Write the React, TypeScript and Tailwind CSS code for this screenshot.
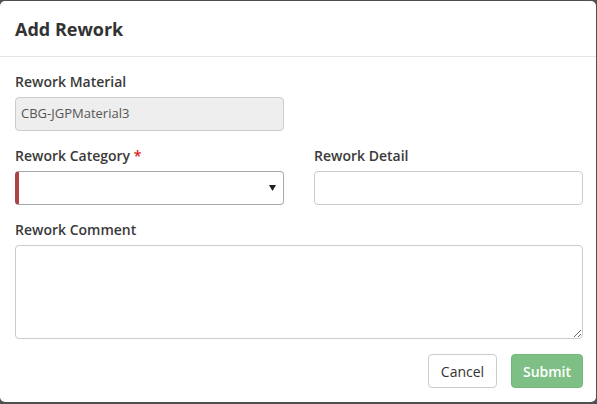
import React from "react";

export default function App() {
  const font = { fontFamily: '"Open Sans", "Liberation Sans", sans-serif' };
  return (
    <div className="w-[597px] h-[404px] bg-[#4f4f4f] pt-[1px] overflow-hidden" style={font}>
      <div className="w-[596px] h-[401px] bg-white rounded-[5px] flex flex-col">
        <div className="h-[56px] px-[15px] flex items-center border-b border-[#e5e5e5]">
          <h4 className="text-[18px] font-bold text-[#333] leading-none mt-[1px]">Add Rework</h4>
        </div>
        <div className="pl-[15px] pr-[13px] pt-[15px] flex flex-col">
          <div className="flex gap-[30px]">
            <div className="w-[269px] shrink-0 flex flex-col">
              <label className="text-[14px] font-semibold text-[#3a3a3a] leading-[20px] mb-[5px]">Rework Material</label>
              <div className="h-[34px] rounded-[4px] border border-[#ccc] bg-[#eee] px-[5px] flex items-center text-[13px] text-[#555]">
                CBG-JGPMaterial3
              </div>
            </div>
          </div>
          <div className="flex gap-[30px] mt-[15px]">
            <div className="w-[269px] shrink-0 flex flex-col">
              <label className="text-[14px] font-semibold text-[#3a3a3a] leading-[20px] mb-[5px]">
                Rework Category <span className="text-[#e02020]">*</span>
              </label>
              <div className="h-[34px] rounded-[4px] border border-[#aaa] border-l-[4px] border-l-[#ae4444] bg-white flex items-center justify-end pr-[7px]">
                <svg width="7" height="6" viewBox="0 0 7 6">
                  <path d="M0 0 L7 0 L3.5 6 Z" fill="#222" />
                </svg>
              </div>
            </div>
            <div className="w-[269px] shrink-0 flex flex-col">
              <label className="text-[14px] font-semibold text-[#3a3a3a] leading-[20px] mb-[5px]">Rework Detail</label>
              <div className="h-[34px] rounded-[4px] border border-[#ccc] bg-white" />
            </div>
          </div>
          <div className="flex flex-col mt-[15px]">
            <label className="text-[14px] font-semibold text-[#3a3a3a] leading-[20px] mb-[5px]">Rework Comment</label>
            <textarea className="w-[568px] h-[94px] rounded-[4px] border border-[#ccc] bg-white outline-none" />
          </div>
          <div className="flex justify-end gap-[14px] mt-[15px]">
            <button className="w-[69px] h-[34px] rounded-[4px] border border-[#ccc] bg-white text-[14px] text-[#333]">
              Cancel
            </button>
            <button className="w-[72px] h-[34px] rounded-[4px] border border-[#72b97b] bg-[#7dbf85] text-[14px] font-semibold text-white">
              Submit
            </button>
          </div>
        </div>
      </div>
    </div>
  );
}
